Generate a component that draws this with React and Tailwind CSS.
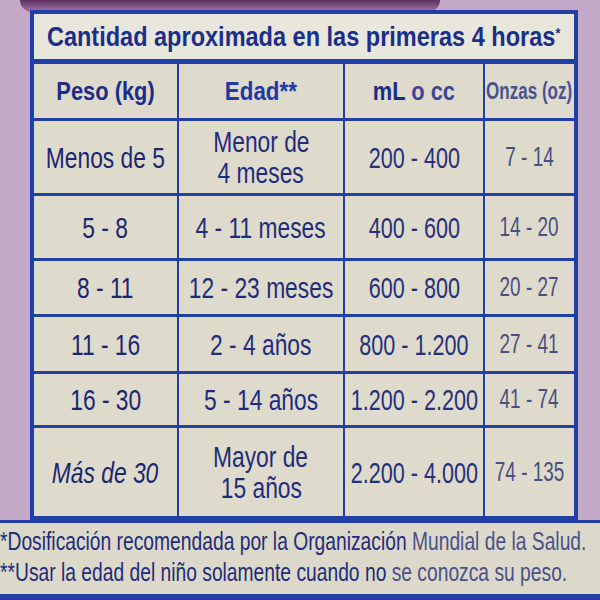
import React from "react";

const rows = [
  { h: "h-[75px]", peso: "Menos de 5", edad: ["Menor de", "4 meses"], ml: "200 - 400", oz: "7 - 14" },
  { h: "h-[65px]", peso: "5 - 8", edad: ["4 - 11 meses"], ml: "400 - 600", oz: "14 - 20" },
  { h: "h-[56px]", peso: "8 - 11", edad: ["12 - 23 meses"], ml: "600 - 800", oz: "20 - 27" },
  { h: "h-[57px]", peso: "11 - 16", edad: ["2 - 4 años"], ml: "800 - 1.200", oz: "27 - 41" },
  { h: "h-[54px]", peso: "16 - 30", edad: ["5 - 14 años"], ml: "1.200 - 2.200", oz: "41 - 74" },
  { h: "h-[88px]", peso: "Más de 30", edad: ["Mayor de", "15 años"], ml: "2.200 - 4.000", oz: "74 - 135", italic: true },
];

const font = { fontFamily: '"Liberation Sans", Arial, sans-serif' };

// condensed look: the label's face is narrow, so squeeze Liberation Sans horizontally
function N({ children, className = "scale-x-[0.76]" }) {
  return <span className={`inline-block whitespace-nowrap ${className}`}>{children}</span>;
}

export default function App() {
  return (
    <div className="w-[600px] h-[600px] overflow-hidden bg-[#c3a8c7] flex flex-col" style={font}>
      <div className="h-[12px] mx-[20px] w-[420px] rounded-b-[40px] bg-gradient-to-b from-[#5e3160] to-[#a07aa4] shrink-0" />

      <div className="ml-[30px] w-[548px] border-[4px] border-[#2140a6] bg-[#dedbcc] shrink-0 -mt-[2px]">
        <div className="h-[50px] flex items-center justify-center bg-[#e9e7dc] border-b-[5px] border-[#2140a6]">
          <span className="inline-block whitespace-nowrap scale-x-[0.84] text-[28px] font-bold text-[#1c2f88]">
            Cantidad aproximada en las primeras 4 horas<sup className="text-[15px]">*</sup>
          </span>
        </div>

        <div className="grid grid-cols-[145px_166px_140px_89px] h-[57px] border-b-[3px] border-[#2140a6] font-bold text-[26px] text-[#1d2c86]">
          <div className="flex items-center justify-center border-r-[2px] border-[#2140a6]">
            <N className="scale-x-[0.84]">Peso (kg)</N>
          </div>
          <div className="flex items-center justify-center border-r-[2px] border-[#2140a6] text-[#2038a8]">
            <N className="scale-x-[0.86]">Edad**</N>
          </div>
          <div className="flex items-center justify-center border-r-[2px] border-[#2140a6]">
            <N className="scale-x-[0.84]">
              mL <span className="text-[#3a4796]">o cc</span>
            </N>
          </div>
          <div className="flex items-center justify-center text-[#4b5290] text-[23px]">
            <N className="scale-x-[0.74]">Onzas (oz)</N>
          </div>
        </div>

        {rows.map((r, i) => (
          <div
            key={i}
            className={`grid grid-cols-[145px_166px_140px_89px] ${r.h} text-[30px] leading-[31px] text-[#1c2670] ${
              i < rows.length - 1 ? "border-b-[3px] border-[#2140a6]" : ""
            }`}
          >
            <div className={`flex items-center justify-center border-r-[2px] border-[#2140a6] ${r.italic ? "italic" : ""}`}>
              <N>{r.peso}</N>
            </div>
            <div className="flex flex-col items-center justify-center border-r-[2px] border-[#2140a6] text-[#1f2c7c]">
              {r.edad.map((t) => (
                <N key={t}>{t}</N>
              ))}
            </div>
            <div className="flex items-center justify-center border-r-[2px] border-[#2140a6] text-[#27307a]">
              <N className="scale-x-[0.72]">{r.ml}</N>
            </div>
            <div className="flex items-center justify-center text-[#4a4f84] text-[27px]">
              <N className="scale-x-[0.7]">{r.oz}</N>
            </div>
          </div>
        ))}
      </div>

      <div className="flex-1 bg-[#dcd9cb] border-t-[3px] border-[#2140a6] pt-[3px] text-[25px] leading-[31px] text-[#232c78]">
        <div className="whitespace-nowrap origin-left scale-x-[0.77]">
          *Dosificación recomendada por la Organización <span className="text-[#4b5088]">Mundial de la Salud.</span>
        </div>
        <div className="whitespace-nowrap origin-left scale-x-[0.77]">
          **Usar la edad del niño solamente cuando no <span className="text-[#4b5088]">se conozca su peso.</span>
        </div>
      </div>
      <div className="h-[6px] bg-[#2140a6] shrink-0" />
    </div>
  );
}
